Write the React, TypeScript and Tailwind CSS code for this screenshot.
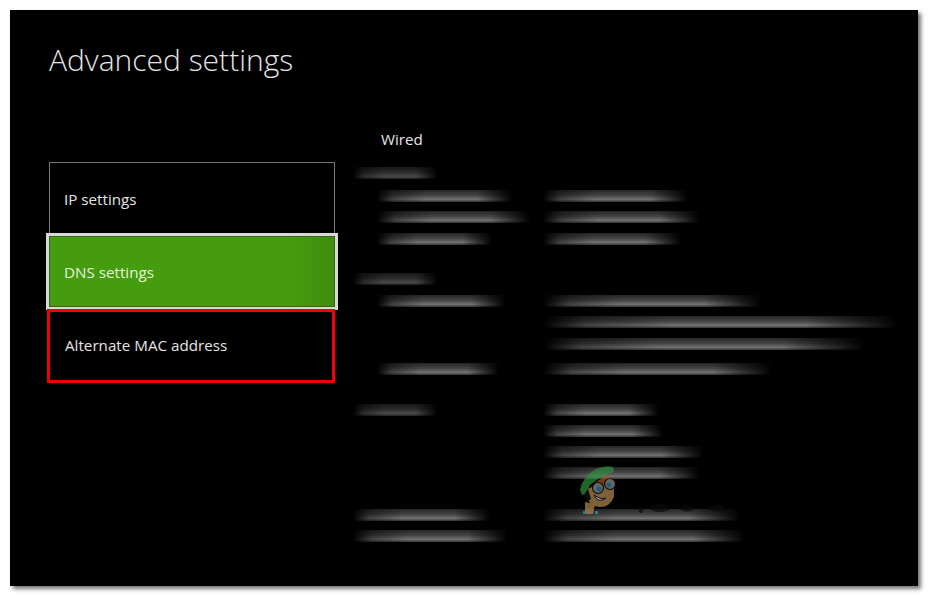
const FONT = "font-['Open_Sans','Noto_Sans',sans-serif]";

type Row = { y: number; lx?: number; lw?: number; rw?: number; dim?: boolean };
const rows: Row[] = [
  { y: 173, lx: 353, lw: 85, dim: true },
  { y: 196, lx: 377, lw: 135, rw: 145 },
  { y: 217, lx: 377, lw: 153, rw: 157 },
  { y: 239, lx: 377, lw: 115, rw: 138 },
  { y: 279, lx: 353, lw: 85, dim: true },
  { y: 301, lx: 377, lw: 128, rw: 218 },
  { y: 322, rw: 355 },
  { y: 344, rw: 322 },
  { y: 369, lx: 377, lw: 122, rw: 229 },
  { y: 410, lx: 353, lw: 85, rw: 116, dim: true },
  { y: 431, rw: 120 },
  { y: 452, rw: 160 },
  { y: 473, rw: 157 },
  { y: 515, lx: 353, lw: 137, rw: 197 },
  { y: 536, lx: 353, lw: 154, rw: 202 },
];

function Bar({ width, left, dim }: { width: number; left?: number; dim?: boolean }) {
  return (
    <div
      className="h-[12px] blur-[0.7px] bg-[linear-gradient(180deg,#262626_0%,#444444_45%,#727272_78%,#333333_100%)] [mask-image:linear-gradient(90deg,transparent_0%,rgba(0,0,0,0.6)_12%,#000_36%,#000_74%,transparent_100%)]"
      style={{ width, marginLeft: left, opacity: dim ? 0.65 : 1 }}
    />
  );
}

function Mascot() {
  return (
    <svg viewBox="0 0 170 70" className="absolute left-[207px] top-[361px] w-[170px] h-[70px] opacity-70">
      <path d="M82 60 q2 -4 0 -7 l-3 0 q-1 4 1 7z" fill="#0a0a0a" />
      <ellipse cx="100" cy="55" rx="10" ry="4" fill="#0a0a0a" />
      <ellipse cx="127" cy="55" rx="7" ry="3.5" fill="#0a0a0a" />
      <ellipse cx="157" cy="55" rx="8" ry="3.5" fill="#0a0a0a" />
      <path d="M25 61 l8 0 l2 -10 l-10 -2z" fill="#b58a52" />
      <path d="M26 37 L48 25 L54 28 L54 44 Q50 54 40 54 Q30 53 28 46z" fill="#b58a52" />
      <path d="M34 30 L48 22 L52 28 L40 34z" fill="#a3561f" />
      <path d="M20 37 Q22 24 36 16 Q46 12 53 14 L54 19 Q42 22 30 32 L26 41 L22 42z" fill="#2f8f3e" />
      <path d="M24 42 L28 36 L31 46 L28 48z" fill="#111" />
      <circle cx="38" cy="35" r="5.5" fill="#8f9292" stroke="#111" strokeWidth="1.2" />
      <circle cx="50" cy="31" r="5.5" fill="#8f9292" stroke="#111" strokeWidth="1.2" />
      <circle cx="39" cy="36" r="2.4" fill="#2a86a6" />
      <circle cx="49" cy="32" r="2.4" fill="#2a86a6" />
      <path d="M34 42 Q38 51 46 45 Q41 47 34 42z" fill="#eee" stroke="#111" strokeWidth="1" />
      <rect x="23" y="58" width="3" height="3" fill="#2a9dc0" />
      <rect x="35" y="58" width="3" height="3" fill="#2a9dc0" />
    </svg>
  );
}

export default function App() {
  return (
    <div className={`w-[929px] h-[597px] bg-white pt-[10px] pl-[10px] overflow-hidden ${FONT}`}>
      <div className="w-[908px] h-[576px] bg-black shadow-[3px_3px_4px_rgba(0,0,0,0.55)] pl-[39px] pt-[28px] overflow-hidden">
        <h1 className="text-[30px] leading-[44px] font-light text-[#e4e4e4]">Advanced settings</h1>
        <div className="flex mt-[10px]">
          <div className="w-[286px] mt-[70px] shrink-0">
            <div className="h-[71px] border border-[#777] border-b-0 flex items-center pl-[14px] pt-[3px] text-[15.2px] text-[#e4e4e4]">
              IP settings
            </div>
            <div className="h-[77px] -mx-[3px] border-[3px] border-[#d8d8d8] bg-[linear-gradient(90deg,#459c0e,#459c0e_85%,#3f8c0f)] shadow-[inset_0_0_0_1px_#34691a] flex items-center pl-[15px] pt-[1px] text-[15.2px] text-[#e6f4da]">
              DNS settings
            </div>
            <div className="h-[74px] -mt-[1px] -ml-[2px] border-[3px] border-[#f00000] flex items-center pl-[15px] pb-[2px] text-[15.2px] text-[#e4e4e4]">
              Alternate MAC address
            </div>
          </div>
          <div className="relative ml-[18px] grow">
            <div className="ml-[28px] text-[15.2px] leading-[20px] mt-[37px] text-[#e4e4e4]">Wired</div>
            <div className="mt-[18px]">
              {rows.map((r, i) => (
                <div
                  key={r.y}
                  className="flex h-[12px]"
                  style={{ marginTop: i === 0 ? 0 : r.y - rows[i - 1].y - 12 }}
                >
                  <div className="w-[190px] shrink-0 flex">
                    {r.lw ? <Bar width={r.lw} left={(r.lx ?? 353) - 353} dim={r.dim} /> : null}
                  </div>
                  {r.rw ? <Bar width={r.rw} /> : null}
                </div>
              ))}
            </div>
            <Mascot />
          </div>
        </div>
      </div>
    </div>
  );
}
